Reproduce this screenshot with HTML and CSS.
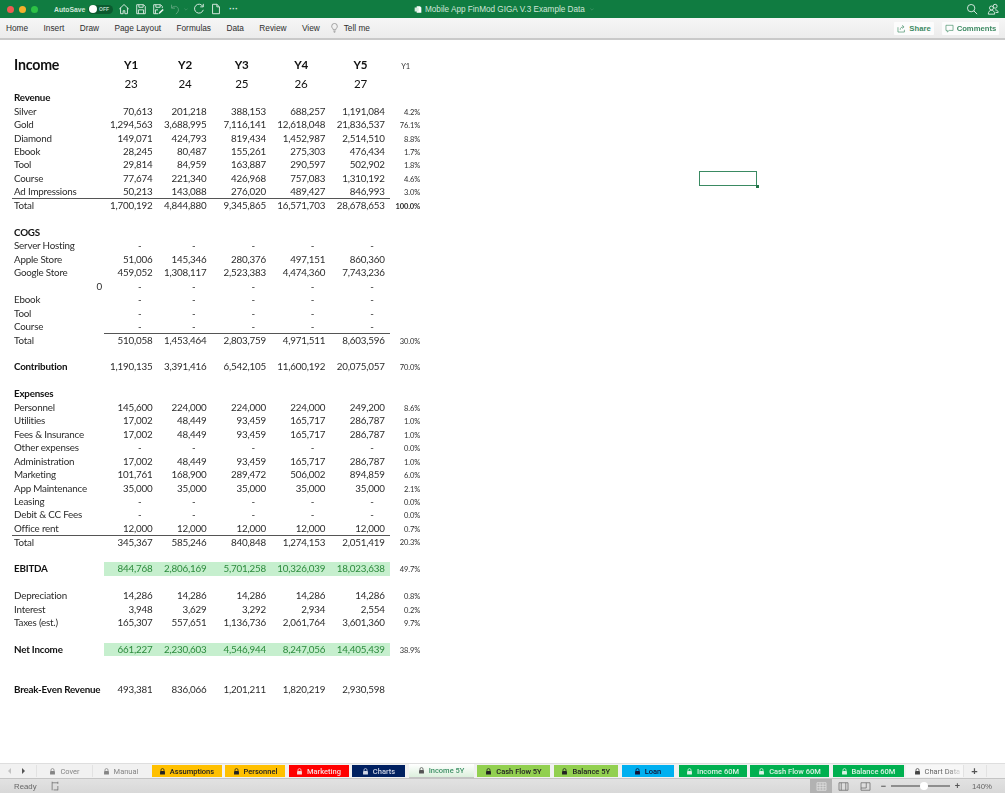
FILE: index.html
```html
<!DOCTYPE html>
<html lang="en">
<head>
<meta charset="utf-8">
<title>Mobile App FinMod GIGA V.3 Example Data</title>
<link rel="stylesheet" href="styles.css">
</head>
<body>
<div class="app">
  <svg class="defs" width="0" height="0" aria-hidden="true"><defs>
    <symbol id="lock" viewBox="0 0 10 10"><path d="M2.800 4.500V3a2.200 2.200 0 0 1 4.400 0v1.500" fill="none" stroke="currentColor" stroke-width="1.100"/><rect x="1.500" y="4.400" width="7" height="5" rx=".6" fill="currentColor"/></symbol>
  </defs></svg>
  <header class="titlebar">
    <div class="tb-left">
      <span class="light red"></span><span class="light amber"></span><span class="light green"></span>
      <span class="autosave">AutoSave</span>
      <span class="toggle"><span class="knob"></span><span class="off">OFF</span></span>
      <svg class="qa" viewBox="0 0 14 14"><path d="M1.500 7 7 1.800 12.500 7M3 5.500V12.500h3V9h2v3.500h3V5.500"/></svg>
      <svg class="qa" viewBox="0 0 14 14"><path d="M2 2h8l2 2v8.500H2zM4.500 2v3h5V2M4 12.500V8h6v4.500"/></svg>
      <svg class="qa" viewBox="0 0 14 14"><path d="M7 12.500H2V2h8l2 2v2M4.500 2v3h5V2M4 12.500V8h3"/><path class="pen" d="m7.500 13 1-2.500 4-3.500 1.200 1.300-4 3.700z"/></svg>
      <svg class="qa dim" viewBox="0 0 14 14"><path d="M3 2v4h4M3 6c2-3 8-3 8 2 0 2-1 3-3 5"/></svg>
      <svg class="caret dim" viewBox="0 0 6 4"><path d="M.5.500 3 3 5.500.5"/></svg>
      <svg class="qa" viewBox="0 0 14 14"><path d="M11.500 4A5.200 5.200 0 1 0 12 8M12 1v3.500H8.500"/></svg>
      <svg class="qa" viewBox="0 0 14 14"><path d="M3 1.500h5l3 3v8H3zM8 1.500v3h3"/></svg>
      <span class="more">···</span>
    </div>
    <div class="doc-title">
      <svg class="doc-icon" viewBox="0 0 12 12"><path d="M4 1h5l2 2v8H4z" fill="#fff"/><rect x="1" y="3" width="6" height="6" fill="#d7eadf"/></svg>
      <span>Mobile App FinMod GIGA V.3 Example Data</span>
      <svg class="caret dim" viewBox="0 0 6 4"><path d="M.5.500 3 3 5.500.5"/></svg>
    </div>
    <div class="tb-right">
      <svg class="qa" viewBox="0 0 14 14"><circle cx="6" cy="6" r="4.300"/><path d="m9.200 9.200 3.800 3.800"/></svg>
      <svg class="qa" viewBox="0 0 14 14"><circle cx="9.500" cy="3.800" r="2.300"/><circle cx="5.200" cy="5.800" r="2.300"/><path d="M1.500 13c0-6 7.500-6 7.500 0zM9.500 8c2 0 3.500 1 3.500 3h-3"/></svg>
    </div>
  </header>
  <nav class="ribbon">
    <div class="menu">
      <span>Home</span><span>Insert</span><span>Draw</span><span>Page Layout</span><span>Formulas</span><span>Data</span><span>Review</span><span>View</span>
      <span class="tell"><svg class="bulb" viewBox="0 0 10 14"><path d="M3.300 9.500C3 7.500 1 7 1 4.500a4 4 0 0 1 8 0C9 7 7 7.500 6.700 9.500zM3.500 11.500h3M4 13h2"/></svg>Tell me</span>
    </div>
    <div class="actions">
      <span class="action share"><svg class="act-icon" viewBox="0 0 14 14"><path d="M1.500 5v7.500h10V9M5 9c0-3 2-4.500 5-4.500M8 2l3 2.500L8 7"/></svg>Share</span>
      <span class="action comments"><svg class="act-icon" viewBox="0 0 14 14"><path d="M1.500 2h11v8h-6l-3 2.500V10h-2z"/></svg>Comments</span>
    </div>
  </nav>
  <main class="sheet">
    <div class="selected-cell"></div>
    <table class="grid">
      <colgroup><col class="c-label"><col class="c-a"><col class="c-a"><col class="c-b"><col class="c-b"><col class="c-b"><col class="c-p"></colgroup>
      <tbody>
        <tr class="r-title"><td>Income</td><td>Y1</td><td>Y2</td><td>Y3</td><td>Y4</td><td>Y5</td><td>Y1</td></tr>
        <tr class="r-years"><td></td><td>23</td><td>24</td><td>25</td><td>26</td><td>27</td><td></td></tr>
        <tr class="r-head"><td>Revenue</td><td></td><td></td><td></td><td></td><td></td><td></td></tr>
        <tr><td>Silver</td><td>70,613</td><td>201,218</td><td>388,153</td><td>688,257</td><td>1,191,084</td><td>4.2%</td></tr>
        <tr><td>Gold</td><td>1,294,563</td><td>3,688,995</td><td>7,116,141</td><td>12,618,048</td><td>21,836,537</td><td>76.1%</td></tr>
        <tr><td>Diamond</td><td>149,071</td><td>424,793</td><td>819,434</td><td>1,452,987</td><td>2,514,510</td><td>8.8%</td></tr>
        <tr><td>Ebook</td><td>28,245</td><td>80,487</td><td>155,261</td><td>275,303</td><td>476,434</td><td>1.7%</td></tr>
        <tr><td>Tool</td><td>29,814</td><td>84,959</td><td>163,887</td><td>290,597</td><td>502,902</td><td>1.8%</td></tr>
        <tr><td>Course</td><td>77,674</td><td>221,340</td><td>426,968</td><td>757,083</td><td>1,310,192</td><td>4.6%</td></tr>
        <tr><td>Ad Impressions</td><td>50,213</td><td>143,088</td><td>276,020</td><td>489,427</td><td>846,993</td><td>3.0%</td></tr>
        <tr class="line-all b-pct"><td>Total</td><td>1,700,192</td><td>4,844,880</td><td>9,345,865</td><td>16,571,703</td><td>28,678,653</td><td>100.0%</td></tr>
        <tr class="gap"><td></td><td></td><td></td><td></td><td></td><td></td><td></td></tr>
        <tr class="r-head"><td>COGS</td><td></td><td></td><td></td><td></td><td></td><td></td></tr>
        <tr class="dashes"><td>Server Hosting</td><td>-</td><td>-</td><td>-</td><td>-</td><td>-</td><td></td></tr>
        <tr><td>Apple Store</td><td>51,006</td><td>145,346</td><td>280,376</td><td>497,151</td><td>860,360</td><td></td></tr>
        <tr><td>Google Store</td><td>459,052</td><td>1,308,117</td><td>2,523,383</td><td>4,474,360</td><td>7,743,236</td><td></td></tr>
        <tr class="dashes zero-row"><td>0</td><td>-</td><td>-</td><td>-</td><td>-</td><td>-</td><td></td></tr>
        <tr class="dashes"><td>Ebook</td><td>-</td><td>-</td><td>-</td><td>-</td><td>-</td><td></td></tr>
        <tr class="dashes"><td>Tool</td><td>-</td><td>-</td><td>-</td><td>-</td><td>-</td><td></td></tr>
        <tr class="dashes"><td>Course</td><td>-</td><td>-</td><td>-</td><td>-</td><td>-</td><td></td></tr>
        <tr class="line-num"><td>Total</td><td>510,058</td><td>1,453,464</td><td>2,803,759</td><td>4,971,511</td><td>8,603,596</td><td>30.0%</td></tr>
        <tr class="gap"><td></td><td></td><td></td><td></td><td></td><td></td><td></td></tr>
        <tr class="bold-label"><td>Contribution</td><td>1,190,135</td><td>3,391,416</td><td>6,542,105</td><td>11,600,192</td><td>20,075,057</td><td>70.0%</td></tr>
        <tr class="gap"><td></td><td></td><td></td><td></td><td></td><td></td><td></td></tr>
        <tr class="r-head"><td>Expenses</td><td></td><td></td><td></td><td></td><td></td><td></td></tr>
        <tr><td>Personnel</td><td>145,600</td><td>224,000</td><td>224,000</td><td>224,000</td><td>249,200</td><td>8.6%</td></tr>
        <tr><td>Utilities</td><td>17,002</td><td>48,449</td><td>93,459</td><td>165,717</td><td>286,787</td><td>1.0%</td></tr>
        <tr><td>Fees &amp; Insurance</td><td>17,002</td><td>48,449</td><td>93,459</td><td>165,717</td><td>286,787</td><td>1.0%</td></tr>
        <tr class="dashes"><td>Other expenses</td><td>-</td><td>-</td><td>-</td><td>-</td><td>-</td><td>0.0%</td></tr>
        <tr><td>Administration</td><td>17,002</td><td>48,449</td><td>93,459</td><td>165,717</td><td>286,787</td><td>1.0%</td></tr>
        <tr><td>Marketing</td><td>101,761</td><td>168,900</td><td>289,472</td><td>506,002</td><td>894,859</td><td>6.0%</td></tr>
        <tr><td>App Maintenance</td><td>35,000</td><td>35,000</td><td>35,000</td><td>35,000</td><td>35,000</td><td>2.1%</td></tr>
        <tr class="dashes"><td>Leasing</td><td>-</td><td>-</td><td>-</td><td>-</td><td>-</td><td>0.0%</td></tr>
        <tr class="dashes"><td>Debit &amp; CC Fees</td><td>-</td><td>-</td><td>-</td><td>-</td><td>-</td><td>0.0%</td></tr>
        <tr><td>Office rent</td><td>12,000</td><td>12,000</td><td>12,000</td><td>12,000</td><td>12,000</td><td>0.7%</td></tr>
        <tr class="line-all"><td>Total</td><td>345,367</td><td>585,246</td><td>840,848</td><td>1,274,153</td><td>2,051,419</td><td>20.3%</td></tr>
        <tr class="gap"><td></td><td></td><td></td><td></td><td></td><td></td><td></td></tr>
        <tr class="hl"><td>EBITDA</td><td>844,768</td><td>2,806,169</td><td>5,701,258</td><td>10,326,039</td><td>18,023,638</td><td>49.7%</td></tr>
        <tr class="gap"><td></td><td></td><td></td><td></td><td></td><td></td><td></td></tr>
        <tr><td>Depreciation</td><td>14,286</td><td>14,286</td><td>14,286</td><td>14,286</td><td>14,286</td><td>0.8%</td></tr>
        <tr><td>Interest</td><td>3,948</td><td>3,629</td><td>3,292</td><td>2,934</td><td>2,554</td><td>0.2%</td></tr>
        <tr><td>Taxes (est.)</td><td>165,307</td><td>557,651</td><td>1,136,736</td><td>2,061,764</td><td>3,601,360</td><td>9.7%</td></tr>
        <tr class="gap"><td></td><td></td><td></td><td></td><td></td><td></td><td></td></tr>
        <tr class="hl"><td>Net Income</td><td>661,227</td><td>2,230,603</td><td>4,546,944</td><td>8,247,056</td><td>14,405,439</td><td>38.9%</td></tr>
        <tr class="gap"><td></td><td></td><td></td><td></td><td></td><td></td><td></td></tr>
        <tr class="gap"><td></td><td></td><td></td><td></td><td></td><td></td><td></td></tr>
        <tr class="bold-label"><td>Break-Even Revenue</td><td>493,381</td><td>836,066</td><td>1,201,211</td><td>1,820,219</td><td>2,930,598</td><td></td></tr>
      </tbody>
    </table>
  </main>
  <div class="tabbar">
    <span class="nav-arrows"><i class="arrow left"></i><i class="arrow right"></i></span>
    <div class="tabs">
      <span class="tab plain w-cover"><svg><use href="#lock"/></svg>Cover</span>
      <span class="tab plain w-manual"><svg><use href="#lock"/></svg>Manual</span>
      <span class="tab amber-tab w-assump"><svg><use href="#lock"/></svg>Assumptions</span>
      <span class="tab amber-tab w-person"><svg><use href="#lock"/></svg>Personnel</span>
      <span class="tab red-tab w-market"><svg><use href="#lock"/></svg>Marketing</span>
      <span class="tab navy-tab w-charts"><svg><use href="#lock"/></svg>Charts</span>
      <span class="tab active w-inc5"><svg><use href="#lock"/></svg>Income 5Y</span>
      <span class="tab lime-tab w-cf5"><svg><use href="#lock"/></svg>Cash Flow 5Y</span>
      <span class="tab lime-tab w-bal5"><svg><use href="#lock"/></svg>Balance 5Y</span>
      <span class="tab blue-tab w-loan"><svg><use href="#lock"/></svg>Loan</span>
      <span class="tab green-tab w-inc60"><svg><use href="#lock"/></svg>Income 60M</span>
      <span class="tab green-tab w-cf60"><svg><use href="#lock"/></svg>Cash Flow 60M</span>
      <span class="tab green-tab w-bal60"><svg><use href="#lock"/></svg>Balance 60M</span>
      <span class="tab cut w-data"><svg><use href="#lock"/></svg>Chart Data</span>
      <span class="tab add">+</span>
    </div>
  </div>
  <footer class="status">
    <div class="st-left"><span>Ready</span>
      <svg class="st-icon" viewBox="0 0 14 14"><path d="M3 2.500h8M3 1v12M11 1v3M5 12.500h6M11 7v6"/></svg>
    </div>
    <div class="st-right">
      <span class="view active"><svg viewBox="0 0 14 12"><path d="M1 1h12v10H1zM1 4.300h12M1 7.700h12M5 1v10M9 1v10"/></svg></span>
      <span class="view"><svg viewBox="0 0 14 12"><path d="M1 1h12v10H1zM4 1v10M10 1v10"/></svg></span>
      <span class="view"><svg viewBox="0 0 14 12"><path d="M1 1h12v10H1zM1 8h7V1"/></svg></span>
      <span class="zoom-btn">−</span>
      <span class="slider"><span class="thumb"></span></span>
      <span class="zoom-btn">+</span>
      <span class="pct">140%</span>
    </div>
  </footer>
</div>
</body>
</html>
```
FILE: styles.css
```css
* { box-sizing: border-box; }
html, body { margin: 0; height: 100%; }
body { font-family: "Lato", "Liberation Sans", sans-serif; background: #fff; overflow: hidden; }
.app { width: 1005px; height: 793px; display: flex; flex-direction: column; position: relative; filter: blur(.35px); }
.defs { position: absolute; }

.titlebar { height: 18px; flex: none; background: #107c41; display: flex; align-items: center; justify-content: space-between; position: relative; color: #e4f1e9; }
.tb-left { display: flex; align-items: center; padding-left: 7px; }
.light { width: 7px; height: 7px; border-radius: 50%; margin-right: 5px; }
.light.red { background: #ee5b52; }
.light.amber { background: #f3b02c; }
.light.green { background: #2cc145; margin-right: 16px; }
.autosave { width: 34px; font: 700 6.800px "Liberation Sans", sans-serif; color: #cfe5d8; white-space: nowrap; }
.toggle { width: 25px; height: 9px; border-radius: 5px; background: #0b5a2f; display: flex; align-items: center; margin-right: 5px; }
.knob { width: 8px; height: 8px; border-radius: 50%; background: #fff; margin-left: 1px; }
.off { font: 700 5px "Liberation Sans", sans-serif; color: #bcd8c8; margin-left: 2px; }
.qa { width: 12px; height: 12px; fill: none; stroke: #dcece3; stroke-width: 1.100; margin-right: 5px; flex: none; }
.qa .pen { fill: #f2f7f4; stroke: none; }
.qa.dim { stroke: #5da47c; margin-right: 3px; }
.caret { width: 4px; height: 3px; fill: none; stroke: #cfe5d8; stroke-width: .8; flex: none; }
.caret.dim { stroke: #5da47c; margin-right: 5px; }
.more { font: 700 9px "Liberation Sans", sans-serif; color: #dcece3; margin-left: 2px; }
.doc-title { position: absolute; left: 414px; top: 0; height: 18px; display: flex; align-items: center; gap: 3px; font: 8.200px "Liberation Sans", sans-serif; color: #cfe5d8; }
.doc-icon { width: 8px; height: 9px; }
.doc-title .caret { margin-left: 2px; }
.tb-right { display: flex; align-items: center; gap: 9px; padding-right: 6px; }
.tb-right .qa { margin-right: 0; }

.ribbon { height: 22px; flex: none; background: linear-gradient(#f6f6f6, #ececec); border-bottom: 2px solid #c9c9c9; display: flex; align-items: center; justify-content: space-between; padding: 0 6px 0 6px; }
.menu { display: flex; align-items: center; gap: 15.400px; font: 8.300px "Liberation Sans", sans-serif; color: #2e2e2e; white-space: nowrap; }
.tell { display: flex; align-items: center; gap: 5.500px; margin-left: -4px; }
.bulb { width: 7px; height: 10px; fill: none; stroke: #777; stroke-width: .9; }
.actions { display: flex; gap: 8px; }
.action { background: #fcfcfc; height: 13px; display: flex; align-items: center; justify-content: center; gap: 3px; border-radius: 1px; font: 700 7.700px "Liberation Sans", sans-serif; color: #3d8a63; }
.action.share { width: 40px; }
.action.comments { width: 57px; }
.act-icon { width: 9px; height: 9px; fill: none; stroke: #3d8a63; stroke-width: 1; }

.sheet { flex: 1; min-height: 0; position: relative; padding: 14px 0 0 12px; }
.grid { border-collapse: collapse; table-layout: fixed; width: 409px; font-size: 9.800px; letter-spacing: -.2px; color: #2b2b2b; }
.c-label { width: 92px; } .c-a { width: 54px; } .c-b { width: 59.400px; } .c-p { width: 31px; }
.grid td { padding: 0 5.500px 0 0; height: 13.460px; line-height: 13px; text-align: right; white-space: nowrap; }
.grid td:first-child { text-align: left; padding: 0 0 0 2px; }
.grid td:last-child { font-size: 7.500px; letter-spacing: -.1px; line-height: 11px; padding: 2px 1px 0 0; }
.zero-row td:first-child { text-align: right; padding-right: 2px; }
.dashes td:not(:first-child):not(:last-child) { padding-right: 16.500px; }
.grid .r-title td { height: 21.500px; font-size: 11.600px; font-weight: 700; text-align: center; padding: 0; color: #111; }
.grid .r-years td { height: 15.500px; font-size: 11.600px; text-align: center; padding: 0; color: #111; }
.grid .r-title td:first-child { font-size: 14.200px; text-align: left; padding-left: 2px; }
.grid .r-title td:last-child { font-size: 7.500px; font-weight: 400; padding-top: 3px; color: #333; }
.r-head td { color: #111; font-weight: 700; }
.line-all td { border-top: 1px solid #555; }
.line-num td { border-top: 1px solid #555; }
.line-num td:first-child, .line-all td:last-child, .line-num td:last-child { border-top: 0; }
.hl td { background: #c6efce; color: #2c8a3c; }
.hl td:first-child, .hl td:last-child { background: none; color: #111; }
.hl td:last-child { color: #333; }
.hl td:first-child { font-weight: 700; }
.bold-label td:first-child { font-weight: 700; color: #111; }
.b-pct td:last-child { font-weight: 700; }
.selected-cell { position: absolute; left: 699px; top: 131px; width: 58px; height: 15px; border: 1.500px solid #3a8a62; }
.selected-cell::after { content: ""; position: absolute; right: -2.500px; bottom: -2.500px; width: 3px; height: 3px; background: #217346; }

.tabbar { height: 16px; flex: none; background: #f1f1f1; border-top: 1px solid #dedede; border-bottom: 1px solid #c4c4c4; display: flex; align-items: flex-start; }
.nav-arrows { width: 36px; height: 14px; display: flex; align-items: center; gap: 11px; padding-left: 8px; flex: none; }
.arrow { width: 0; height: 0; border: 3.500px solid transparent; }
.arrow.left { border-right-color: #c2c2c2; border-left-width: 0; }
.arrow.right { border-left-color: #555; border-right-width: 0; }
.tabs { display: flex; align-items: flex-start; flex: 1; overflow: hidden; gap: 3.500px; padding-top: 1px; }
.tab { height: 12px; display: flex; align-items: center; justify-content: center; gap: 4px; font: 500 7.500px "Roboto", "Liberation Sans", sans-serif; white-space: nowrap; flex: none; position: relative; }
.tab svg { width: 7px; height: 7px; flex: none; }
.tab.plain { color: #858585; border-left: 1px solid #e2e2e2; font-weight: 400; margin-right: -3.500px; }
.tab.plain + .amber-tab { margin-left: 3.500px; }
.amber-tab { background: #ffc000; color: #222; }
.red-tab { background: #ff0000; color: #f8d9d9; }
.navy-tab { background: #002060; color: #cfd6e6; }
.lime-tab { background: #92d050; color: #222; }
.blue-tab { background: #00b0f0; color: #113; }
.green-tab { background: #00b050; color: #d9f2e4; }
.tab.active { height: 15px; margin-top: -1px; background: linear-gradient(#fff, #dcf0dd); border-bottom: 2px solid #c4c4c4; color: #3b8f63; }
.tab.active svg { color: #555; }
.tab.cut { justify-content: flex-start; padding-left: 8px; background: #f7f7f7; color: #666; font-weight: 400; overflow: hidden; margin-left: -1.500px; }
.tab.cut svg { color: #444; }
.tab.cut::after { content: ""; position: absolute; right: 0; top: 0; width: 16px; height: 100%; background: linear-gradient(90deg, rgba(247,247,247,0), #f7f7f7); }
.tab.add { width: 24px; margin-left: -3.500px; color: #555; font: 700 11px "Liberation Sans", sans-serif; border-right: 1px solid #e2e2e2; border-left: 1px solid #e2e2e2; }
.w-cover { width: 56px; } .w-manual { width: 56px; } .w-assump { width: 70px; } .w-person { width: 60px; }
.w-market { width: 60px; } .w-charts { width: 53px; } .w-inc5 { width: 65px; } .w-cf5 { width: 73px; }
.w-bal5 { width: 64.500px; } .w-loan { width: 52px; } .w-inc60 { width: 68px; margin-left: 1.500px; } .w-cf60 { width: 79px; }
.w-bal60 { width: 71px; } .w-data { width: 57px; }

.status { height: 14px; flex: none; background: linear-gradient(#e2e2e2, #d8d8d8); display: flex; align-items: center; justify-content: space-between; font: 7.800px "Liberation Sans", sans-serif; color: #666; padding-left: 14px; }
.st-left { display: flex; align-items: center; gap: 13px; }
.st-icon { width: 10px; height: 10px; fill: none; stroke: #666; stroke-width: 1; }
.st-right { display: flex; align-items: center; height: 100%; padding-right: 15px; }
.view { width: 22px; height: 14px; display: flex; align-items: center; justify-content: center; }
.view svg { width: 11px; height: 9px; fill: none; stroke: #6a6a6a; stroke-width: 1; }
.view.active { background: #b2b2b2; }
.view.active svg { stroke: #e5e5e5; }
.view:nth-child(3) { margin-right: 4px; }
.zoom-btn { width: 7px; text-align: center; font-weight: 700; font-size: 9px; color: #555; }
.slider { width: 59px; height: 2px; background: #8e8e8e; margin: 0 4px; position: relative; }
.thumb { position: absolute; left: 29px; top: -3px; width: 8px; height: 8px; border-radius: 50%; background: #fff; }
.pct { margin-left: 11px; width: 18px; white-space: nowrap; }
```
